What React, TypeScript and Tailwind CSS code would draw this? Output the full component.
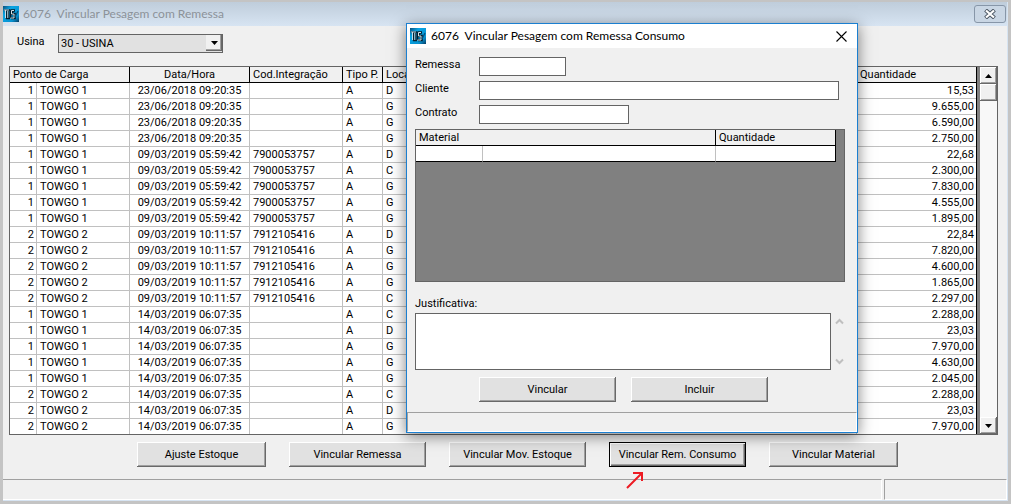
import type { ReactNode } from 'react'

type Row = {
  ponto: number
  data: string
  cod: string
  local: string
  qtd: string
}

const JUN = '23/06/2018 09:20:35'
const MAR1 = '09/03/2019 05:59:42'
const MAR2 = '09/03/2019 10:11:57'
const MAR3 = '14/03/2019 06:07:35'

const rows: Row[] = [
  { ponto: 1, data: JUN, cod: '', local: 'D', qtd: '15,53' },
  { ponto: 1, data: JUN, cod: '', local: 'G', qtd: '9.655,00' },
  { ponto: 1, data: JUN, cod: '', local: 'G', qtd: '6.590,00' },
  { ponto: 1, data: JUN, cod: '', local: 'G', qtd: '2.750,00' },
  { ponto: 1, data: MAR1, cod: '7900053757', local: 'D', qtd: '22,68' },
  { ponto: 1, data: MAR1, cod: '7900053757', local: 'C', qtd: '2.300,00' },
  { ponto: 1, data: MAR1, cod: '7900053757', local: 'G', qtd: '7.830,00' },
  { ponto: 1, data: MAR1, cod: '7900053757', local: 'G', qtd: '4.555,00' },
  { ponto: 1, data: MAR1, cod: '7900053757', local: 'G', qtd: '1.895,00' },
  { ponto: 2, data: MAR2, cod: '7912105416', local: 'D', qtd: '22,84' },
  { ponto: 2, data: MAR2, cod: '7912105416', local: 'G', qtd: '7.820,00' },
  { ponto: 2, data: MAR2, cod: '7912105416', local: 'G', qtd: '4.600,00' },
  { ponto: 2, data: MAR2, cod: '7912105416', local: 'G', qtd: '1.865,00' },
  { ponto: 2, data: MAR2, cod: '7912105416', local: 'C', qtd: '2.297,00' },
  { ponto: 1, data: MAR3, cod: '', local: 'C', qtd: '2.288,00' },
  { ponto: 1, data: MAR3, cod: '', local: 'D', qtd: '23,03' },
  { ponto: 1, data: MAR3, cod: '', local: 'G', qtd: '7.970,00' },
  { ponto: 1, data: MAR3, cod: '', local: 'G', qtd: '4.630,00' },
  { ponto: 1, data: MAR3, cod: '', local: 'G', qtd: '2.045,00' },
  { ponto: 2, data: MAR3, cod: '', local: 'C', qtd: '2.288,00' },
  { ponto: 2, data: MAR3, cod: '', local: 'D', qtd: '23,03' },
  { ponto: 2, data: MAR3, cod: '', local: 'G', qtd: '7.970,00' },
]

const th = 'h-4 p-0 px-[3px] border-r border-b border-black font-normal bg-[#f0f0f0] overflow-hidden whitespace-nowrap'
const td = 'h-4 p-0 border-r border-b border-[#c0c0c0] group-last:h-[15px] group-last:border-b-0 whitespace-nowrap overflow-hidden'
const field = 'h-[19px] px-1 bg-white border border-[#646464] outline-none'

function AppIcon() {
  return (
    <svg width="16" height="16" viewBox="0 0 16 16" className="shrink-0" aria-hidden="true">
      <defs>
        <linearGradient id="appIcon" x1="0" y1="0" x2="1" y2="1">
          <stop offset="0" stopColor="#0b4c78" />
          <stop offset="0.3" stopColor="#08a5e4" />
          <stop offset="0.75" stopColor="#0791cf" />
          <stop offset="1" stopColor="#063a60" />
        </linearGradient>
      </defs>
      <rect width="16" height="16" fill="url(#appIcon)" />
      <path d="M1 4h6.500M3.500 4v8.500M5.500 4v8.500M7.500 4v8M3 12.500h4" stroke="#06202f" strokeWidth="1.600" fill="none" />
      <path d="M1 4h5M2.500 4v8M4.800 5v7" stroke="#d5eaf3" strokeWidth="0.900" fill="none" />
      <path d="M12 4.500H9v3.500h2.500v4H8" stroke="#06202f" strokeWidth="2.600" fill="none" />
      <path d="M11 4.500H8.500v3.500H11v4H7.500" stroke="#e8f6fc" strokeWidth="0.900" fill="none" />
      <path d="M12 11l3-6" stroke="#06507d" strokeWidth="1.200" fill="none" />
    </svg>
  )
}

function Button({ children, wide, active }: { children: ReactNode; wide?: boolean; active?: boolean }) {
  return (
    <button
      type="button"
      className={`h-[25px] bg-[#e1e1e1] text-center whitespace-nowrap ${wide ? 'w-[137px]' : 'w-[129px]'} ${
        active
          ? 'border border-black shadow-[inset_1px_1px_0_#fff,inset_-1px_-1px_0_#696969,inset_-2px_-2px_0_#a0a0a0]'
          : 'shadow-[inset_-1px_-1px_0_#696969,inset_1px_1px_0_#fff,inset_-2px_-2px_0_#a0a0a0]'
      }`}
    >
      {children}
    </button>
  )
}

function ScrollButton({ up }: { up?: boolean }) {
  return (
    <button
      type="button"
      aria-label={up ? 'Rolar para cima' : 'Rolar para baixo'}
      className="w-full h-[17px] shrink-0 flex items-center justify-center bg-[#f0f0f0] shadow-[inset_-1px_-1px_0_#696969,inset_1px_1px_0_#fff,inset_-2px_-2px_0_#a0a0a0]"
    >
      <svg width="7" height="4" viewBox="0 0 7 4">
        <path d={up ? 'M0 4L3.500 0L7 4Z' : 'M0 0L3.500 4L7 0Z'} fill="#000" />
      </svg>
    </button>
  )
}

function PesagemGrid() {
  return (
    <div className="flex ml-[6px] mr-[9px] border border-[#646464] bg-[#808080]">
      <div className="flex-1 min-w-0 bg-white border-r border-black">
        <table className="w-full table-fixed border-separate border-spacing-0 leading-[15px]">
          <colgroup>
            <col className="w-[27px]" />
            <col className="w-[93px]" />
            <col className="w-[120px]" />
            <col className="w-[93px]" />
            <col className="w-[40px]" />
            <col />
            <col className="w-[119px]" />
          </colgroup>
          <thead>
            <tr>
              <th colSpan={2} className={`${th} text-left`}>Ponto de Carga</th>
              <th className={th}>Data/Hora</th>
              <th className={`${th} text-left`}>Cod.Integração</th>
              <th className={`${th} text-left`}>Tipo P.</th>
              <th className={`${th} text-left`}>Local</th>
              <th className={`${th} text-left border-r-0`}>Quantidade</th>
            </tr>
          </thead>
          <tbody>
            {rows.map((r, i) => (
              <tr key={i} className="group">
                <td className={`${td} text-right pr-[2px]`}>{r.ponto}</td>
                <td className={`${td} pl-[3px]`}>TOWGO {r.ponto}</td>
                <td className={`${td} text-center`}>{r.data}</td>
                <td className={`${td} pl-[3px]`}>{r.cod}</td>
                <td className={`${td} pl-[3px]`}>A</td>
                <td className={`${td} pl-[3px]`}>{r.local}</td>
                <td className={`${td} text-right pr-[2px] border-r-0`}>{r.qtd}</td>
              </tr>
            ))}
          </tbody>
        </table>
      </div>
      {/* scrollbar */}
      <div className="w-[17px] ml-[3px] flex flex-col bg-[#f8f8f8]">
        <ScrollButton up />
        <div className="h-[17px] bg-[#f0f0f0] shadow-[inset_-1px_-1px_0_#696969,inset_1px_1px_0_#fff,inset_-2px_-2px_0_#a0a0a0]" />
        <div className="flex-1" />
        <ScrollButton />
      </div>
    </div>
  )
}

function ConsumoDialog() {
  return (
    <section
      role="dialog"
      aria-label="Vincular Pesagem com Remessa Consumo"
      className="absolute left-[406px] top-[23px] w-[452px] bg-[#f0f0f0] border border-[#1b7fd0] shadow-[0_3px_14px_rgba(0,0,0,0.5)]"
    >
      <header className="h-6 flex items-center pl-[3px] pr-[10px] bg-white">
        <AppIcon />
        <h2 className="ml-[5px] flex-1 font-[Lato,sans-serif] text-xs whitespace-pre">6076  Vincular Pesagem com Remessa Consumo</h2>
        <button type="button" aria-label="Fechar">
          <svg width="11" height="11" viewBox="0 0 11 11">
            <path d="M0.500 0.500L10.500 10.500M10.500 0.500L0.500 10.500" stroke="#000" strokeWidth="1.100" />
          </svg>
        </button>
      </header>

      <form className="px-2 pt-[9px]">
        <div className="flex flex-col gap-[5px]">
          <div className="flex">
            <label htmlFor="remessa" className="w-16 leading-[15px]">Remessa</label>
            <input id="remessa" className={`${field} w-[87px]`} />
          </div>
          <div className="flex">
            <label htmlFor="cliente" className="w-16 leading-[15px]">Cliente</label>
            <input id="cliente" className={`${field} w-[360px]`} />
          </div>
          <div className="flex">
            <label htmlFor="contrato" className="w-16 leading-[15px]">Contrato</label>
            <input id="contrato" className={`${field} w-[150px]`} />
          </div>
        </div>

        <div className="mt-[5px] h-[153px] w-[430px] border border-[#646464] bg-[#808080]">
          <table className="w-[420px] table-fixed border-separate border-spacing-0 leading-[15px]">
            <colgroup>
              <col className="w-[67px]" />
              <col />
              <col className="w-[120px]" />
            </colgroup>
            <thead>
              <tr>
                <th colSpan={2} className={`${th} text-left`}>Material</th>
                <th className={`${th} text-left`}>Quantidade</th>
              </tr>
            </thead>
            <tbody>
              <tr>
                <td className="h-4 p-0 bg-white border-r border-b border-r-[#c0c0c0] border-b-black" />
                <td className="h-4 p-0 bg-white border-r border-b border-r-[#c0c0c0] border-b-black" />
                <td className="h-4 p-0 bg-white border-r border-b border-black" />
              </tr>
            </tbody>
          </table>
        </div>

        <label htmlFor="justificativa" className="block mt-[14px] h-[17px] leading-[15px]">Justificativa:</label>
        <div className="flex">
          <textarea id="justificativa" className="w-[416px] h-[57px] px-1 resize-none bg-white border border-[#646464] outline-none" />
          <div className="ml-1 py-[5px] flex flex-col justify-between">
            <svg width="9" height="7" viewBox="0 0 9 7">
              <path d="M1 5.500L4.500 2L8 5.500" stroke="#bfbfbf" strokeWidth="2" fill="none" />
            </svg>
            <svg width="9" height="7" viewBox="0 0 9 7">
              <path d="M1 1.500L4.500 5L8 1.500" stroke="#bfbfbf" strokeWidth="2" fill="none" />
            </svg>
          </div>
        </div>

        <div className="flex gap-[15px] mt-[7px] pl-16">
          <Button wide>Vincular</Button>
          <Button wide>Incluir</Button>
        </div>
      </form>

      <footer className="mt-[10px] h-5 border border-t-[#a0a0a0] border-l-[#a0a0a0] border-r-white border-b-white" />
    </section>
  )
}

export default function App() {
  return (
    <main className="relative min-h-screen flex flex-col pt-[2px] pl-[3px] pr-[3px] pb-[3px] bg-[#c4c4c4] font-[Roboto,sans-serif] text-[11px] leading-[15px] text-black">
      <div className="flex-1 flex flex-col bg-[#f0f0f0] border-r border-b border-[#d7e4f2]">
        {/* title bar */}
        <header className="h-6 flex items-center pr-[1px] bg-linear-to-b from-[#bfcddb] to-[#d7e4f2]">
          <AppIcon />
          <h1 className="ml-1 flex-1 font-[Lato,sans-serif] text-xs text-[#8c9299] whitespace-pre">6076  Vincular Pesagem com Remessa</h1>
          <button type="button" aria-label="Fechar janela" className="w-8 h-[18px] flex items-center justify-center rounded-[3px] border border-[#8796a8] bg-[#c9d6e4]">
            <svg width="12" height="10" viewBox="0 0 12 10">
              <path d="M1.500 1L10.500 9M10.500 1L1.500 9" stroke="#4a5562" strokeWidth="4" />
              <path d="M2 1.500L10 8.500M10 1.500L2 8.500" stroke="#fff" strokeWidth="2.200" />
            </svg>
          </button>
        </header>

        <div className="flex items-start pl-[14px] pt-2">
          <label htmlFor="usina" className="w-[41px]">Usina</label>
          <div className="relative">
            <select id="usina" className="block w-[165px] h-[19px] appearance-none bg-[#e1e1e1] border border-[#646464] px-[2px] outline-none">
              <option>30 - USINA</option>
            </select>
            <span className="absolute right-px top-px w-4 h-4 flex items-center justify-center pointer-events-none bg-[#f0f0f0] shadow-[inset_-1px_-1px_0_#696969,inset_-2px_-2px_0_#a0a0a0]">
              <svg width="7" height="4" viewBox="0 0 7 4">
                <path d="M0 0L3.500 4L7 0Z" fill="#000" />
              </svg>
            </span>
          </div>
        </div>

        <div className="mt-[13px]">
          <PesagemGrid />
        </div>

        <div className="flex gap-[23px] mt-[7px] pl-[134px]">
          <Button>Ajuste Estoque</Button>
          <Button wide>Vincular Remessa</Button>
          <Button wide>Vincular Mov. Estoque</Button>
          <Button wide active>Vincular Rem. Consumo</Button>
          <Button>Vincular Material</Button>
        </div>

        <footer className="mt-auto flex gap-[2px] h-[21px]">
          <div className="flex-1 border-t border-r border-b border-t-[#a0a0a0] border-r-white border-b-white" />
          <div className="w-[123px] border border-t-[#a0a0a0] border-l-[#a0a0a0] border-r-white border-b-white" />
        </footer>
      </div>

      <ConsumoDialog />

      {/* pointer to the active button */}
      <svg width="18" height="18" viewBox="0 0 18 18" className="absolute left-[626px] top-[471px]" aria-hidden="true">
        <path d="M1 17L16 2M7 2H17M16 1V10" stroke="#ed1c24" strokeWidth="2" fill="none" />
      </svg>
    </main>
  )
}
